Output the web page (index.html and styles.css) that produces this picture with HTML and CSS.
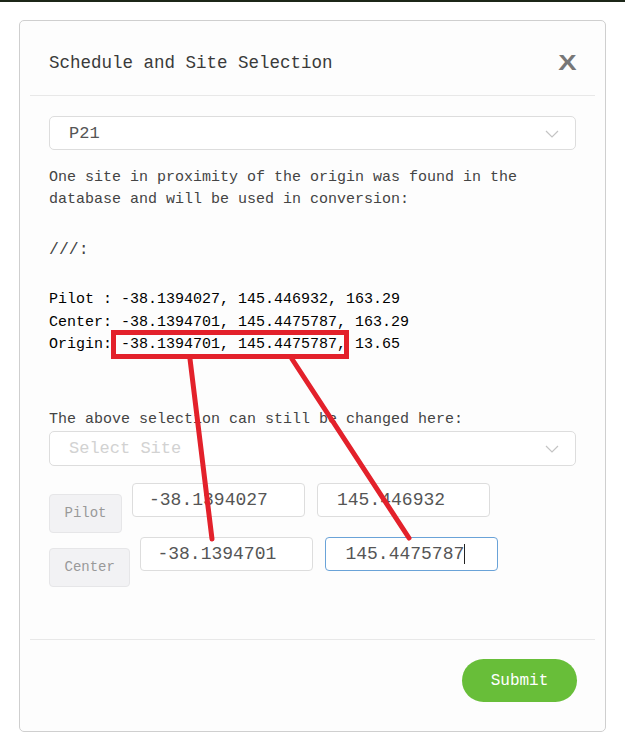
FILE: index.html
```html
<!DOCTYPE html>
<html lang="en">
<head>
  <meta charset="UTF-8">
  <meta name="viewport" content="width=device-width,initial-scale=1.0">
  <title>Schedule and Site Selection</title>
  <link rel="stylesheet" href="styles.css">
</head>
<body>
  <div class="topbar"></div>
  <div class="modal">
    <div class="modal-header">
      <h2 class="modal-title">Schedule and Site Selection</h2>
      <span class="close">X</span>
    </div>
    <div class="modal-body">
      <div class="select-box">
        <span>P21</span>
        <svg class="chevron" width="14" height="8" viewBox="0 0 14 8"><path d="M1 1l6 6 6-6" fill="none" stroke="#c4c4c4" stroke-width="1.2"/></svg>
      </div>
      <p class="note">One site in proximity of the origin was found in the database and will be used in conversion:</p>
      <p class="site-name">///:</p>
      <div class="coords">
        <div>Pilot : -38.1394027, 145.446932, 163.29</div>
        <div>Center: -38.1394701, 145.4475787, 163.29</div>
        <div>Origin: -38.1394701, 145.4475787, 13.65</div>
      </div>
      <p class="note change">The above selection can still be changed here:</p>
      <div class="select-box placeholder">
        <span>Select Site</span>
        <svg class="chevron" width="14" height="8" viewBox="0 0 14 8"><path d="M1 1l6 6 6-6" fill="none" stroke="#c4c4c4" stroke-width="1.2"/></svg>
      </div>
      <div class="point-row">
        <span class="point-label">Pilot</span>
        <div class="field">-38.1394027</div>
        <div class="field gap-wide">145.446932</div>
      </div>
      <div class="point-row">
        <span class="point-label">Center</span>
        <div class="field">-38.1394701</div>
        <div class="field gap-wide focused">145.4475787<span class="caret"></span></div>
      </div>
    </div>
    <div class="modal-footer">
      <button class="submit-btn">Submit</button>
    </div>
  </div>

  <!-- annotation drawn over the screenshot -->
  <svg class="annotation" width="625" height="751" viewBox="0 0 625 751">
    <rect x="113.5" y="332.5" width="233" height="24" fill="none" stroke="#e3212b" stroke-width="5"/>
    <line x1="190" y1="359" x2="212" y2="539" stroke="#e3212b" stroke-width="5" stroke-linecap="round"/>
    <line x1="292" y1="359" x2="409" y2="538" stroke="#e3212b" stroke-width="5" stroke-linecap="round"/>
  </svg>
</body>
</html>
```

FILE: styles.css
```css
html, body {
  margin: 0;
  padding: 0;
  background: #fff;
  font-family: "Liberation Mono", "Courier New", monospace;
  color: #333;
}
.topbar {
  height: 2px;
  background: #1c2618;
}
.modal {
  position: relative;
  margin: 18px 19px 0 19px;
  height: 712px;
  box-sizing: border-box;
  border: 1px solid #cfcfcf;
  border-radius: 5px;
  background: #fdfdfd;
  display: flex;
  flex-direction: column;
}
.modal-header {
  margin: 0 10px;
  height: 75px;
  box-sizing: border-box;
  padding: 10px 18px 0 19px;
  border-bottom: 1px solid #e8e8e8;
  display: flex;
  align-items: center;
  justify-content: space-between;
}
.modal-title {
  margin: 0;
  font-size: 17.5px;
  font-weight: normal;
  color: #3a3a3a;
}
.close {
  font-family: "Liberation Sans", Arial, sans-serif;
  font-weight: bold;
  font-size: 22px;
  color: #777;
  transform: scaleX(1.25);
  transform-origin: right center;
}
.modal-body {
  padding: 20px 29px 0 29px;
  flex: 1;
}
.select-box {
  height: 34px;
  box-sizing: border-box;
  border: 1px solid #ddd;
  border-radius: 5px;
  background: #fff;
  padding: 0 16px 0 19px;
  display: flex;
  align-items: center;
  justify-content: space-between;
  font-size: 17px;
  color: #555;
}
.select-box.placeholder { color: #d2d2d2; height: 35px; }
.chevron { margin-top: 2px; }
.note {
  margin: 17px 0 0 0;
  font-size: 15px;
  line-height: 22px;
  color: #444;
}
.site-name {
  margin: 28px 0 0 0;
  font-size: 16.5px;
  line-height: 22px;
  color: #444;
}
.coords {
  margin-top: 28px;
  font-size: 15px;
  line-height: 22.5px;
  color: #000;
}
.note.change { margin-top: 52px; }
.point-row {
  display: flex;
  align-items: flex-start;
  margin-top: 17px;
}
.point-row + .point-row { margin-top: 4px; }
.point-label {
  margin-top: 11px;
  height: 39px;
  box-sizing: border-box;
  padding: 0 14.5px;
  border: 1px solid #e6e6e8;
  border-radius: 4px;
  background: #f2f2f4;
  color: #999;
  font-size: 14px;
  display: flex;
  align-items: center;
}
.field {
  margin-left: 10px;
  width: 173px;
  height: 34px;
  box-sizing: border-box;
  border: 1px solid #ddd;
  border-radius: 4px;
  background: #fff;
  padding: 0 0 0 16px;
  font-size: 18px;
  color: #555;
  display: flex;
  align-items: center;
}
.field.gap-wide { margin-left: 12px; padding-left: 19px; }
.field.focused { border-color: #6aa3d8; }
.caret {
  display: inline-block;
  width: 1px;
  height: 20px;
  background: #222;
}
.modal-footer {
  margin: 0 10px;
  height: 92px;
  box-sizing: border-box;
  border-top: 1px solid #e8e8e8;
  padding: 19px 18px 0 0;
  display: flex;
  justify-content: flex-end;
  align-items: flex-start;
}
.submit-btn {
  width: 115px;
  height: 43px;
  border: none;
  border-radius: 22px;
  background: #68be39;
  color: #fff;
  font-family: inherit;
  font-size: 16px;
  cursor: pointer;
}
.annotation {
  position: absolute;
  top: 0;
  left: 0;
  pointer-events: none;
}
```
